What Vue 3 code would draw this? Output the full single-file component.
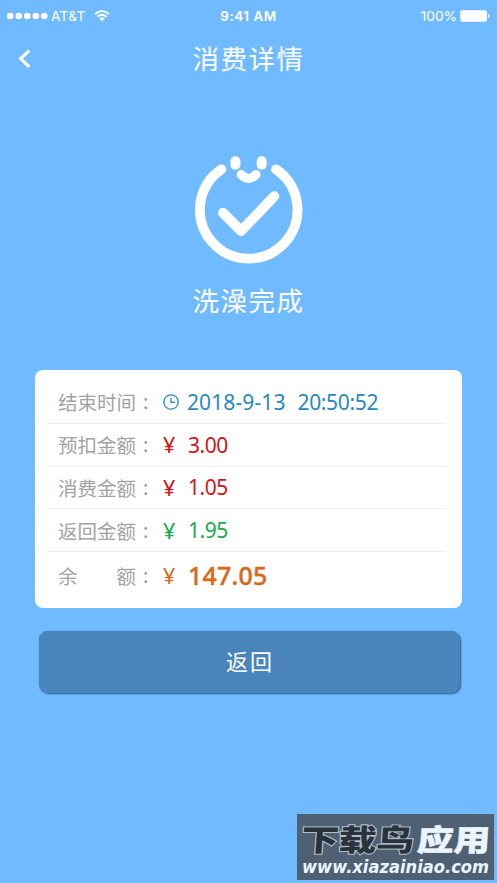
<script setup>
const rows = [
  { label: '结束时间', kind: 'time', date: '2018-9-13', time: '20:50:52' },
  { label: '预扣金额', kind: 'red', value: '3.00' },
  { label: '消费金额', kind: 'red', value: '1.05' },
  { label: '返回金额', kind: 'green', value: '1.95' },
  { label: '余额', kind: 'balance', value: '147.05' }
]
</script>

<template>
  <main class="screen">
    <div class="status">
      <div class="carrier">
        <svg class="signal" width="41" height="8" viewBox="0 0 41 8">
          <circle v-for="n in 5" :key="n" :cx="n * 8.5 - 5.2" cy="4" r="3.3" fill="#fff" />
        </svg>
        <span class="operator">AT&amp;T</span>
        <svg class="wifi" width="16" height="12" viewBox="0 0 16 12" fill="none" stroke="#fff" stroke-width="1.8">
          <path d="M.9 4.2Q8-2.3 15.1 4.2M3.3 6.8Q8 2.7 12.7 6.8" />
          <path d="M5.2 8.5Q8 6.2 10.8 8.5L8 11.5Z" fill="#fff" stroke="none" />
        </svg>
      </div>
      <span class="clock">9:41 AM</span>
      <div class="power">
        <span>100%</span>
        <svg width="30" height="12" viewBox="0 0 30 12" fill="#fff">
          <rect x=".3" y=".2" width="26.6" height="11.6" rx="2" />
          <path d="M28 4q1.6.4 1.6 2T28 8z" />
        </svg>
      </div>
    </div>

    <header class="nav">
      <svg class="back" width="14" height="20" viewBox="0 0 14 20" fill="none" stroke="#fff" stroke-width="3.2">
        <path d="M11.2 1.6 2.6 9.6 11.2 17.8" />
      </svg>
      <h1>消费详情</h1>
    </header>

    <section class="result">
      <svg width="110" height="112" viewBox="194 154 110 112" fill="none" stroke="#fff" stroke-linecap="round" stroke-linejoin="round">
        <path d="M221.4 169.4A48.8 48.8 0 1 0 276 169.4" stroke-width="9.8" />
        <path d="M223 212.8 241 231 274.3 196.3" stroke-width="10" />
        <path d="M241.2 174.6Q248.6 182.2 256 174.6" stroke-width="9.2" />
        <g fill="#fff" stroke="none">
          <rect x="230.4" y="156.2" width="10" height="13.6" rx="5" />
          <rect x="256.7" y="156.2" width="10" height="13.6" rx="5" />
        </g>
      </svg>
      <h2>洗澡完成</h2>
    </section>

    <section class="card">
      <div v-for="row in rows" :key="row.label" class="row" :class="row.kind">
        <div class="label">
          <span v-for="ch in row.label" :key="ch">{{ ch }}</span>
        </div>
        <span class="colon">:</span>
        <template v-if="row.kind === 'time'">
          <svg class="dial" width="16" height="16" viewBox="0 0 16 16" fill="none" stroke="#2789bd" stroke-width="1.3">
            <circle cx="8" cy="8" r="7.2" />
            <path d="M8 3.7V8.3H12" />
          </svg>
          <span class="value date">{{ row.date }}</span>
          <span class="value hour">{{ row.time }}</span>
        </template>
        <template v-else>
          <span class="yen">¥</span>
          <span class="value">{{ row.value }}</span>
        </template>
      </div>
    </section>

    <button class="return">返回</button>

    <aside class="mark">
      <svg width="197" height="66" viewBox="0 0 197 66">
        <g class="mark-name" transform="translate(3 0) skewX(-4)">
          <text class="dark" x="3" y="37" textLength="113" lengthAdjust="spacingAndGlyphs">下载鸟</text>
          <text class="light" x="119" y="37" textLength="73" lengthAdjust="spacingAndGlyphs">应用</text>
        </g>
        <text class="url" x="5" y="59" textLength="187" lengthAdjust="spacingAndGlyphs">www.xiazainiao.com</text>
      </svg>
    </aside>
  </main>
</template>

<style>
body {
  margin: 0;
  background: #70bbff;
}
</style>

<style scoped>
.screen {
  position: relative;
  box-sizing: border-box;
  width: 497px;
  height: 883px;
  overflow: hidden;
  background: #70bbff;
  color: #fff;
  font-family: "Noto Sans", "Noto Sans CJK SC", sans-serif;
}
.status {
  display: grid;
  grid-template-columns: 1fr auto 1fr;
  align-items: center;
  height: 32px;
  padding: 0 7px;
  font: 14px/32px Inter, sans-serif;
}
.carrier,
.power {
  display: flex;
  align-items: center;
}
.operator {
  margin: 0 8px 0 3px;
  font-size: 13.7px;
  letter-spacing: 0.3px;
}
.clock {
  font-size: 13.5px;
  font-weight: 600;
  letter-spacing: 0.5px;
}
.power {
  justify-content: flex-end;
  gap: 3px;
  font-size: 13.7px;
}
.nav {
  display: grid;
  grid-template-columns: 40px 1fr 40px;
  align-items: center;
  height: 54px;
}
.back {
  margin-left: 18px;
}
h1,
h2 {
  margin: 0;
  font-size: 26.5px;
  font-weight: 400;
  line-height: 36px;
  letter-spacing: 1.5px;
  text-align: center;
}
.result {
  display: flex;
  flex-direction: column;
  align-items: center;
  height: 284px;
  padding-top: 68px;
  box-sizing: border-box;
}
.result svg {
  margin-left: 1px;
}
h2 {
  margin-top: 17px;
}
.card {
  box-sizing: border-box;
  width: 427px;
  height: 238px;
  margin-left: 35px;
  padding: 11px 16px 0 12px;
  border-radius: 8px;
  background: #fff;
}
.row {
  display: flex;
  align-items: center;
  box-sizing: border-box;
  height: 42.8px;
  padding-left: 11px;
  border-bottom: 1.5px solid #eee;
  font-size: 21px;
  letter-spacing: -0.5px;
}
.row.balance {
  height: 46px;
  border: 0;
}
.label {
  display: flex;
  justify-content: space-between;
  width: 78px;
  color: #a3a3a3;
  font-size: 19.5px;
  letter-spacing: 0;
}
.colon {
  width: 27px;
  padding-left: 7px;
  box-sizing: border-box;
  color: #999;
  font-size: 20px;
}
.time {
  color: #2789bd;
}
.red {
  color: #d51318;
}
.green {
  color: #16ad50;
}
.balance {
  color: #d96a1c;
}
.dial {
  margin-right: 8px;
}
.date {
  letter-spacing: 0.1px;
}
.hour {
  margin-left: 12px;
  letter-spacing: -0.35px;
}
.yen {
  width: 25px;
  font-size: 21.5px;
}
.balance .value {
  font-size: 25px;
  font-weight: 500;
  letter-spacing: 0.2px;
  -webkit-text-stroke: 0.4px currentColor;
}
.return {
  display: block;
  width: 421px;
  height: 62px;
  margin: 23px 0 0 39px;
  padding: 0 0 4px 1px;
  border: 0;
  border-radius: 9px;
  background: #4985ba;
  box-shadow: 0 0 1px #3d75a8, 1px 1px 2px #285b8b;
  color: #fff;
  font: 400 22px/58px "Noto Sans CJK SC", sans-serif;
  letter-spacing: 2px;
}
.mark {
  position: absolute;
  left: 297px;
  top: 814px;
  width: 197px;
  height: 66px;
  background: #4e6072;
}
.mark svg {
  display: block;
  overflow: visible;
}
.mark-name {
  font: 900 30px "Liberation Sans", "Noto Sans CJK SC", sans-serif;
}
.dark {
  fill: #28333e;
  stroke: #b4bdc5;
  stroke-width: 2px;
  paint-order: stroke;
}
.light {
  fill: #eaf5ff;
  stroke: #eaf5ff;
  stroke-width: 0.5px;
}
.url {
  fill: #e9f5ff;
  font: italic 700 17px "DejaVu Sans", sans-serif;
}
</style>
